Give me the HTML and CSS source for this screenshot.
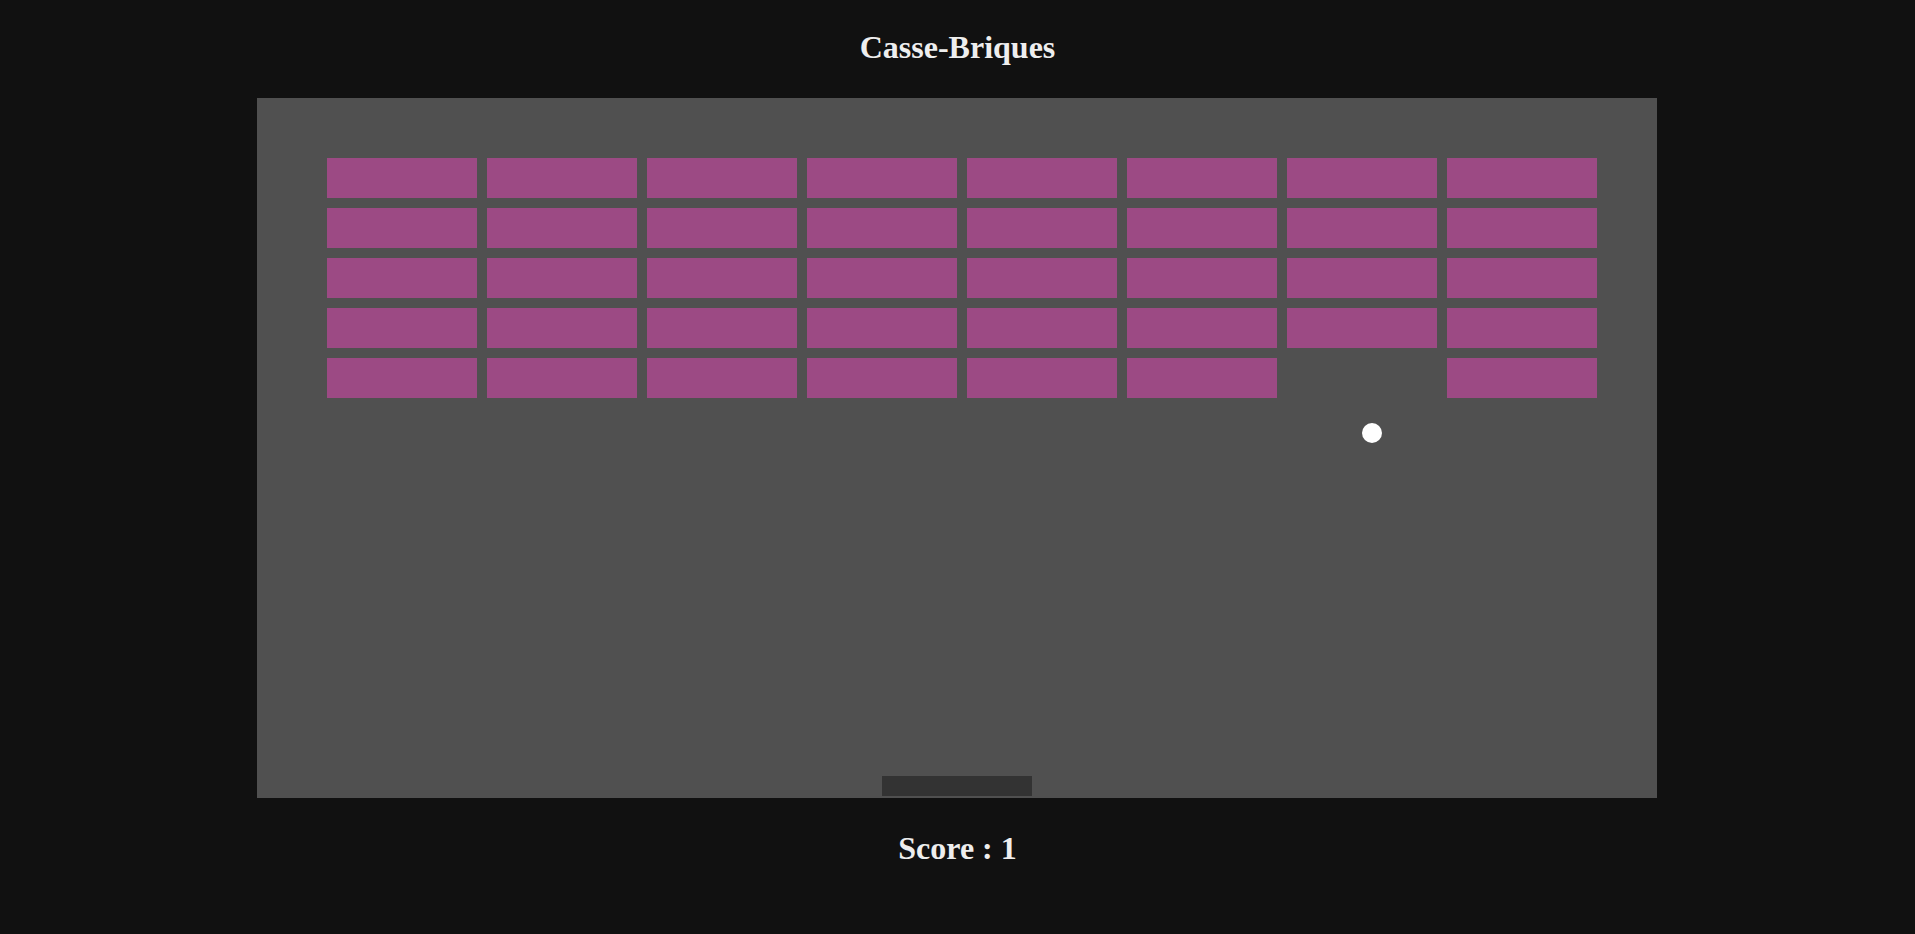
FILE: index.html
```html
<!DOCTYPE html>
<html lang="fr">
<head>
<meta charset="utf-8">
<title>Casse-Briques</title>
<link rel="stylesheet" href="styles.css">
</head>
<body>
<h1 class="title">Casse-Briques</h1>
<div class="board">
  <div class="bricks">
    <div class="brick"></div><div class="brick"></div><div class="brick"></div><div class="brick"></div><div class="brick"></div><div class="brick"></div><div class="brick"></div><div class="brick"></div>
    <div class="brick"></div><div class="brick"></div><div class="brick"></div><div class="brick"></div><div class="brick"></div><div class="brick"></div><div class="brick"></div><div class="brick"></div>
    <div class="brick"></div><div class="brick"></div><div class="brick"></div><div class="brick"></div><div class="brick"></div><div class="brick"></div><div class="brick"></div><div class="brick"></div>
    <div class="brick"></div><div class="brick"></div><div class="brick"></div><div class="brick"></div><div class="brick"></div><div class="brick"></div><div class="brick"></div><div class="brick"></div>
    <div class="brick"></div><div class="brick"></div><div class="brick"></div><div class="brick"></div><div class="brick"></div><div class="brick"></div><div class="brick broken"></div><div class="brick"></div>
  </div>
  <div class="ball"></div>
  <div class="paddle"></div>
</div>
<h2 class="score">Score : 1</h2>
</body>
</html>
```
FILE: styles.css
```css
html, body {
  margin: 0;
  padding: 0;
  background: #111111;
}
body {
  display: flex;
  flex-direction: column;
  align-items: center;
  font-family: "Liberation Serif", "Times New Roman", serif;
  color: #eeeeee;
  min-height: 934px;
}
.title {
  margin: 29px 0 33px;
  font-size: 32px;
  line-height: 36px;
  font-weight: bold;
}
.board {
  position: relative;
  width: 1400px;
  height: 700px;
  margin-right: 1px;
  background: #505050;
  flex-shrink: 0;
}
.bricks {
  display: grid;
  grid-template-columns: repeat(8, 150px);
  grid-auto-rows: 40px;
  gap: 10px;
  padding: 60px 0 0 70px;
}
.brick {
  background: #9c4a84;
}
.brick.broken {
  visibility: hidden;
}
.ball {
  position: absolute;
  left: 1105px;
  top: 325px;
  width: 20px;
  height: 20px;
  border-radius: 50%;
  background: #ffffff;
}
.paddle {
  position: absolute;
  left: 625px;
  top: 678px;
  width: 150px;
  height: 20px;
  background: #333333;
}
.score {
  margin: 32px 0 0;
  font-size: 32px;
  line-height: 36px;
  font-weight: bold;
}
```
